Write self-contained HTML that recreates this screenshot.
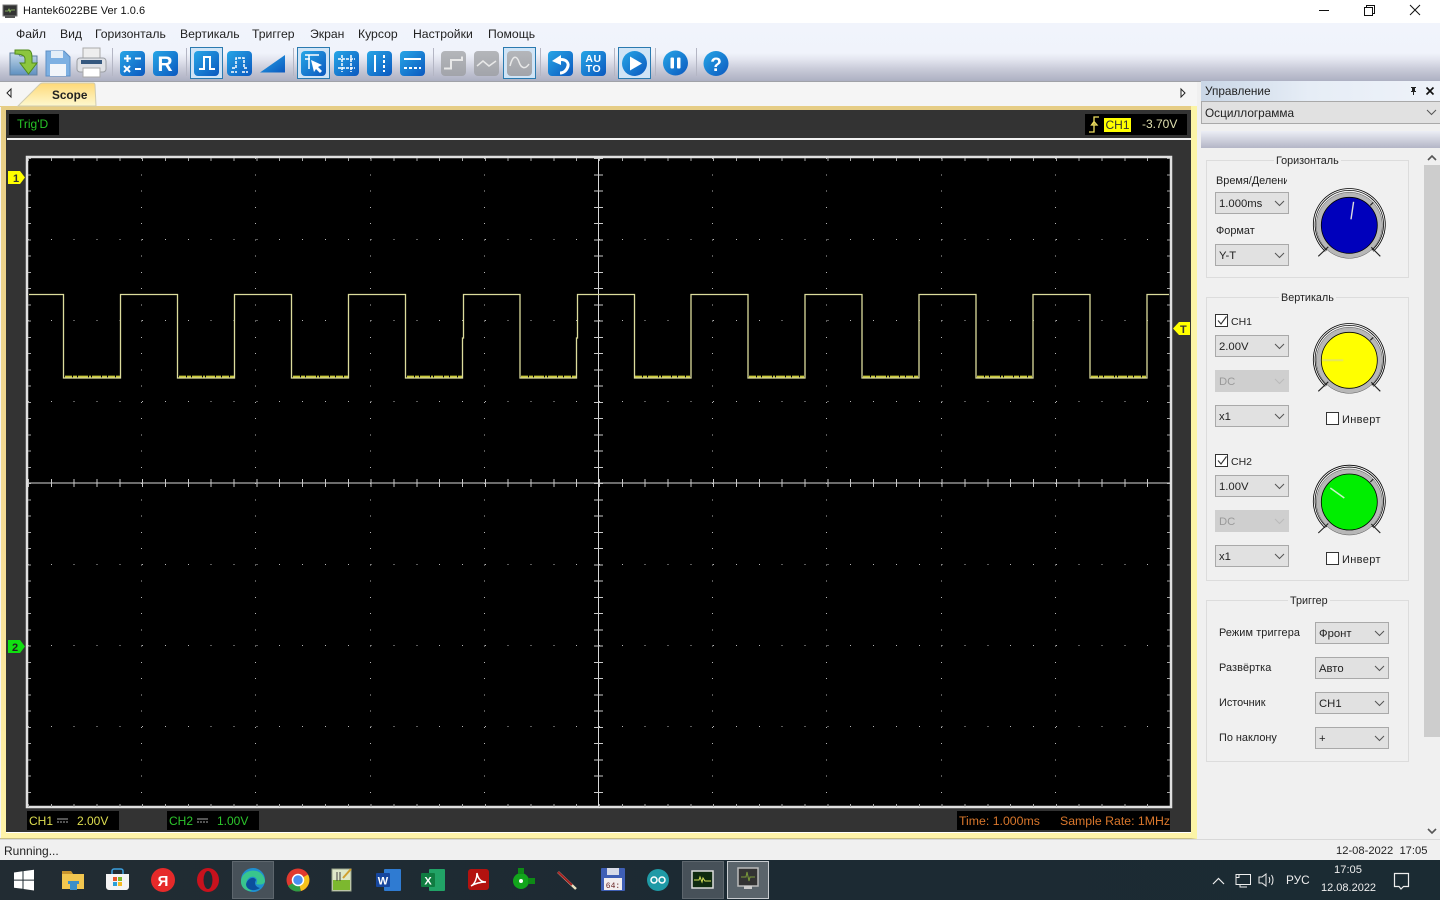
<!DOCTYPE html>
<html lang="ru"><head><meta charset="utf-8"><title>Hantek6022BE Ver 1.0.6</title>
<style>
html,body{margin:0;padding:0;width:1440px;height:900px;overflow:hidden;background:#f0f0f0;font-family:"Liberation Sans","DejaVu Sans",sans-serif;font-size:11px;color:#222}
div,span{position:absolute;white-space:nowrap;box-sizing:border-box}
svg{position:absolute;left:0;top:0}
.m{top:27px;font-size:12.2px;color:#222}
.c{width:74px;height:22px;background:#e1e1e1;border:1px solid #a9a9a9;line-height:22px;padding-left:3px;font-size:11.3px;color:#222}
.c.d{background:#cfcfcf;border-color:#cfcfcf;color:#9a9a9a}
.l{font-size:10.9px;color:#222;margin-top:1px}
.s{font-size:10.5px;color:#222;margin-top:1px}
.i{font-size:11px;letter-spacing:.35px;color:#222;margin-top:1px}
.g{border:1px solid #dcdcdc;left:1206px;width:203px}
.lg{background:#f0f0f0;font-size:10.8px;color:#222;padding:0 2px;text-align:center;margin-top:1px}
.cb{width:13px;height:13px;background:#fff;border:1px solid #333}
</style></head><body>
<!-- title bar -->
<div style="left:0;top:0;width:1440px;height:23px;background:#fff"></div>
<div style="left:23px;top:5px;font-size:11px;color:#111;letter-spacing:.05px;line-height:13px">Hantek6022BE Ver 1.0.6</div>
<!-- menu + toolbar -->
<div style="left:0;top:23px;width:1440px;height:59px;background:linear-gradient(#f1f4fc 0,#f0f3fb 30px,#e4e6f0 36px,#c9cbd9 46px,#adb0c2 58px)"></div>
<div style="left:0;top:81px;width:1440px;height:1px;background:#a0a2a8"></div>
<span class="m" style="left:16px">Файл</span><span class="m" style="left:60px">Вид</span><span class="m" style="left:95px">Горизонталь</span><span class="m" style="left:180px">Вертикаль</span><span class="m" style="left:252px">Триггер</span><span class="m" style="left:310px">Экран</span><span class="m" style="left:358px">Курсор</span><span class="m" style="left:413px">Настройки</span><span class="m" style="left:488px">Помощь</span>
<!-- tab row -->
<div style="left:0;top:82px;width:1197px;height:25px;background:#f5f5f5"></div>
<!-- scope frame -->
<div style="left:0;top:106px;width:1197px;height:733px;background:linear-gradient(#e6cd85,#f5dc96 60%,#fff3a8);border-bottom:1px solid #c9bf84;border-right:6px solid #fbf4a6"></div>
<div style="left:0;top:107px;width:1px;height:731px;background:#f5f5f5"></div>
<div style="left:6px;top:110px;width:1185px;height:722px;background:#333"></div>
<div style="left:6px;top:832px;width:1185px;height:1px;background:#fff"></div>
<div style="left:7px;top:138px;width:1184px;height:2px;background:#f2f2f2"></div>
<div style="left:9px;top:114px;width:50px;height:21px;background:#000;color:#27c427;font-size:12px;line-height:21px;padding-left:8px">Trig'D</div>
<div style="left:1085px;top:114px;width:102px;height:21px;background:#000"></div>
<div style="left:1104px;top:118px;width:27px;height:14px;background:#ff0;color:#333;font-size:12px;line-height:14px;text-align:center">CH1</div>
<div style="left:1142px;top:114px;color:#e0e0b0;font-size:12px;line-height:21px">-3.70V</div>
<!-- bottom info boxes -->
<div style="left:27px;top:811px;width:92px;height:19px;background:#000;color:#dede50;font-size:12px;line-height:20px"><span style="left:2px;top:0">CH1</span><span style="left:50px;top:0">2.00V</span></div>
<div style="left:167px;top:811px;width:92px;height:19px;background:#000;color:#2cc62c;font-size:12px;line-height:20px"><span style="left:2px;top:0">CH2</span><span style="left:50px;top:0">1.00V</span></div>
<div style="left:957px;top:811px;width:213px;height:19px;background:#000;color:#d9772c;font-size:12.3px;line-height:20px"><span style="left:2px;top:0">Time: 1.000ms</span><span style="left:103px;top:0">Sample Rate: 1MHz</span></div>
<!-- right panel -->
<div style="left:1197px;top:82px;width:243px;height:757px;background:#f0f0f0"></div>
<div style="left:1201px;top:81px;width:239px;height:20px;background:linear-gradient(90deg,#c9d6e6,#e6edf6 45%,#eef2f9);font-size:11.8px;line-height:20px;padding-left:4px;color:#222">Управление</div>
<div style="left:1201px;top:101px;width:239px;height:23px;background:#e1e1e1;border:1px solid #a9a9a9;font-size:11.8px;line-height:23px;padding-left:3px;color:#222;border-right:0">Осциллограмма</div>
<div style="left:1201px;top:131px;width:239px;height:17px;background:linear-gradient(#eceef5,#b3b5c6)"></div>
<div style="left:1424px;top:148px;width:16px;height:691px;background:#f0f0f0"></div>
<div style="left:1424px;top:165px;width:16px;height:572px;background:#cdcdcd"></div>
<div class="g" style="top:160px;height:118px"></div>
<div class="g" style="top:297px;height:284px"></div>
<div class="g" style="top:600px;height:162px"></div>
<div class="lg" style="left:1274px;top:154px">Горизонталь</div>
<div class="lg" style="left:1279px;top:291px">Вертикаль</div>
<div class="lg" style="left:1288px;top:594px">Триггер</div>
<span class="l" style="left:1216px;top:174px">Время/Делени</span><div style="left:1287px;top:172px;width:10px;height:16px;background:#f0f0f0"></div>
<span class="l" style="left:1216px;top:224px">Формат</span>
<div class="c" style="left:1215px;top:192px">1.000ms</div>
<div class="c" style="left:1215px;top:244px">Y-T</div>
<div class="cb" style="left:1215px;top:314px"></div><span class="s" style="left:1231px;top:315px">CH1</span>
<div class="c" style="left:1215px;top:335px">2.00V</div>
<div class="c d" style="left:1215px;top:370px">DC</div>
<div class="c" style="left:1215px;top:405px">x1</div>
<div class="cb" style="left:1326px;top:412px"></div><span class="i" style="left:1342px;top:413px">Инверт</span>
<div class="cb" style="left:1215px;top:454px"></div><span class="s" style="left:1231px;top:455px">CH2</span>
<div class="c" style="left:1215px;top:475px">1.00V</div>
<div class="c d" style="left:1215px;top:510px">DC</div>
<div class="c" style="left:1215px;top:545px">x1</div>
<div class="cb" style="left:1326px;top:552px"></div><span class="i" style="left:1342px;top:553px">Инверт</span>
<span class="l" style="left:1219px;top:626px;letter-spacing:.1px">Режим триггера</span>
<span class="l" style="left:1219px;top:661px;letter-spacing:.1px">Развёртка</span>
<span class="l" style="left:1219px;top:696px">Источник</span>
<span class="l" style="left:1219px;top:731px">По наклону</span>
<div class="c" style="left:1315px;top:622px">Фронт</div>
<div class="c" style="left:1315px;top:657px">Авто</div>
<div class="c" style="left:1315px;top:692px">CH1</div>
<div class="c" style="left:1315px;top:727px">+</div>
<!-- status -->
<div style="left:0;top:839px;width:1440px;height:1px;background:#d8d8d8"></div>
<div style="left:4px;top:844px;font-size:12px;color:#222">Running...</div>
<div style="left:1336px;top:845px;font-size:11.2px;color:#222">12-08-2022&nbsp; 17:05</div>
<!-- taskbar -->
<div style="left:0;top:860px;width:1440px;height:40px;background:linear-gradient(90deg,#222c33,#1c2a33 50%,#1b2b33)"></div>
<div style="left:232px;top:861px;width:42px;height:38px;background:#475159;border:1px solid #5d666d"></div>
<div style="left:682px;top:861px;width:42px;height:38px;background:#475159;border:1px solid #5d666d"></div>
<div style="left:727px;top:861px;width:42px;height:38px;background:#5a646b;border:1px solid #c8ccd0"></div>
<div style="left:1286px;top:873px;color:#eee;font-size:11.8px">РУС</div>
<div style="left:1334px;top:864px;color:#eee;font-size:11.2px">17:05</div>
<div style="left:1321px;top:882px;color:#eee;font-size:11px">12.08.2022</div>

<svg width="1440" height="900" viewBox="0 0 1440 900" xmlns="http://www.w3.org/2000/svg">
<defs>
<linearGradient id="b" x1="0" y1="0" x2="1" y2="1"><stop offset="0" stop-color="#27a6e6"/><stop offset="1" stop-color="#0b58bf"/></linearGradient>
<linearGradient id="gr" x1="0" y1="0" x2="0" y2="1"><stop offset="0" stop-color="#b4b6ba"/><stop offset="1" stop-color="#a2a4aa"/></linearGradient>
<linearGradient id="tab" x1="0" y1="0" x2="0" y2="1"><stop offset="0" stop-color="#ffd977"/><stop offset="1" stop-color="#fdf8cf"/></linearGradient>
<linearGradient id="fld" x1="0" y1="0" x2="0" y2="1"><stop offset="0" stop-color="#c5d9ea"/><stop offset="1" stop-color="#5f90c0"/></linearGradient>
<g id="knob">
<path d="M-24,26 A36,36 0 1 1 24,26" fill="none" stroke="#000" stroke-width=".8"/>
<path d="M-22.500,25 A34.200,34.200 0 1 1 22.500,25" fill="none" stroke="#000" stroke-width=".8"/>
<circle r="33" fill="#b7b7b7" stroke="#555" stroke-width=".5"/>
<path d="M-31,31 L-21,21.500 M31,31 L22,22 M21,-20 L24,-23" stroke="#222" stroke-width="1.100"/>
</g>
<path id="cv" d="M0,0 l4.500,4.500 4.500,-4.500" fill="none" stroke="#555" stroke-width="1"/>
</defs>

<!-- tab -->
<path d="M18,106 L40,84 Q41,83 43,83 L93,83 Q95,83 95,85 L96,106 Z" fill="url(#tab)" stroke="#cfcbb0"/>
<text x="52" y="99" font-family="Liberation Sans,sans-serif" font-size="11.800" font-weight="bold" fill="#222">Scope</text>
<path d="M11,89 L7,93 L11,97 Z" fill="#fff" stroke="#222"/>
<path d="M1181,89 L1185,93 L1181,97 Z" fill="#fff" stroke="#222"/>

<!-- plot -->
<rect x="27" y="157" width="1144" height="650" fill="#000" stroke="#e0e0e0" stroke-width="2.500"/>
<g stroke-width="1" fill="none" shape-rendering="crispEdges">
<g stroke-dasharray="1 15.25" stroke="#b5b5b5">
<path d="M141.500,158V807M255.500,158V807M370.500,158V807M484.500,158V807M712.500,158V807M826.500,158V807M941.500,158V807M1055.500,158V807"/>
</g>
<g stroke-dasharray="1 21.84" stroke="#b5b5b5">
<path d="M28,239.500H1170M28,320.500H1170M28,401.500H1170M28,564.500H1170M28,645.500H1170M28,726.500H1170"/>
</g>
<!-- border ticks -->
<g stroke="#a8a8a8" stroke-dasharray="1 21.84"><path stroke-width="3" d="M28,159.500H1170M28,805.500H1170"/></g>
<g stroke="#a8a8a8" stroke-dasharray="1 15.25"><path stroke-width="3" d="M29.500,158.200V807M1168.500,158.200V807"/></g>
<!-- center -->
<path d="M598.500,158V807M28,483H1170" stroke="#d8d8d8"/>
<g stroke="#c8c8c8" stroke-dasharray="1 15.25"><path stroke-width="9" d="M598.500,158.200V807"/></g>
<g stroke="#c8c8c8" stroke-dasharray="1 21.84"><path stroke-width="8" d="M28,483H1170"/></g>
</g>
<!-- wave noise -->
<path d="M65,376.600H120M179,376.600H234M293,376.600H348M407,376.600H462M521,376.600H576M635,376.600H690M749,376.600H804M863,376.600H918M977,376.600H1032M1091,376.600H1146" stroke="#c8c83a" stroke-width="2" stroke-dasharray="7 1 4 1 10 1 2 1 9 1 5 1" fill="none"/>
<!-- waveform -->
<path d="M29,294.500H63.500V378H120.500V294.500H177.500V378H234.500V294.500H291.500V378H348.500V294.500H405.500V378H462.500V338H463.500V294.500H520V378H576.500V338H577.500V294.500H634.500V378H691V294.500H748V378H805V294.500H862V378H919V294.500H976V378H1033V294.500H1090V378H1147V294.500H1169" fill="none" stroke="#dcdc9c" stroke-width="1.300"/>
<!-- markers -->
<path d="M8,171H20L25,177.500L20,184H8Z" fill="#ff0"/><text x="13" y="182" font-family="Liberation Sans,sans-serif" font-size="11" font-weight="bold" fill="#333">1</text>
<path d="M8,640H20L25,646.500L20,653H8Z" fill="#11e011"/><text x="12" y="651" font-family="Liberation Sans,sans-serif" font-size="11" font-weight="bold" fill="#222">2</text>
<path d="M1190,322H1179L1173,328.500L1179,335H1190Z" fill="#ff0"/><text x="1180" y="333" font-family="Liberation Sans,sans-serif" font-size="11" font-weight="bold" fill="#333">T</text>
<!-- trigger glyph -->
<path d="M1089,132H1094V117H1099M1091.500,125L1094,121.500L1097,125Z" fill="none" stroke="#f0e060" stroke-width="1.300"/>
<!-- coupling glyphs -->
<path d="M57,819H68M57,822H59M60,822H62M63,822H65M66,822H68M197,819H208M197,822H199M200,822H202M203,822H205M206,822H208" stroke="#ddd" stroke-width=".8" fill="none"/>

<!-- window buttons -->
<path d="M1319,10.500H1329" stroke="#111"/>
<rect x="1364.500" y="7.500" width="8" height="8" fill="none" stroke="#111"/><path d="M1366.500,7.500V5.500H1374.500V13.500H1372.500" fill="none" stroke="#111"/>
<path d="M1410,5L1420,15M1420,5L1410,15" stroke="#111"/>
<!-- app icon -->
<rect x="3" y="5" width="14" height="11" fill="#333" stroke="#777"/><path d="M5,11h3l1,-2 1,3 1,-2h4" stroke="#9c6" fill="none" stroke-width=".8"/><rect x="5" y="16" width="10" height="2" fill="#555"/>

<!-- panel header buttons -->
<path d="M1411,87h5v1h-1v3h1v1h-2v3h-1v-3h-2v-1h1v-3h-1z" fill="#222"/>
<path d="M1426.500,87.500L1433.500,94.500M1433.500,87.500L1426.500,94.500" stroke="#111" stroke-width="1.600"/>
<use href="#cv" x="1427" y="110"/>
<path d="M1428,160L1432,156L1436,160" fill="none" stroke="#555" stroke-width="1.600"/>
<path d="M1428,829L1432,833L1436,829" fill="none" stroke="#555" stroke-width="1.600"/>

<!-- combos arrows -->
<use href="#cv" x="1275" y="201"/><use href="#cv" x="1275" y="253"/><use href="#cv" x="1275" y="344"/>
<use href="#cv" x="1275" y="414"/><use href="#cv" x="1275" y="484"/><use href="#cv" x="1275" y="554"/>
<path d="M1275,379l4.500,4.500 4.500,-4.500M1275,519l4.500,4.500 4.500,-4.500" fill="none" stroke="#bbb"/>
<use href="#cv" x="1375" y="631"/><use href="#cv" x="1375" y="666"/><use href="#cv" x="1375" y="701"/><use href="#cv" x="1375" y="736"/>
<!-- check marks -->
<path d="M1218,320.500L1221,324L1226.500,316.500M1218,460.500L1221,464L1226.500,456.500" fill="none" stroke="#333" stroke-width="1.100"/>

<!-- knobs -->
<g transform="translate(1349.300,225.300)"><use href="#knob"/><circle r="28" fill="#0000bc" stroke="#000" stroke-width=".8"/><path d="M4.300,-23.500L1.700,-6" stroke="#ddd" stroke-width="1.400"/></g>
<g transform="translate(1349.300,360.300)"><use href="#knob"/><circle r="28" fill="#ffff00" stroke="#000" stroke-width=".8"/><path d="M-27,0H-6" stroke="#e6e65a" stroke-width="2"/></g>
<g transform="translate(1349.300,502)"><use href="#knob"/><circle r="28" fill="#00ee00" stroke="#000" stroke-width=".8"/><path d="M-19,-14L-5,-4" stroke="#c9f2c9" stroke-width="1.500"/></g>

<!-- toolbar separators -->
<g stroke="#b4b6c4"><path d="M112.500,48V76M186.500,48V76M293.500,48V76M433.500,48V76M540.500,48V76M614.500,48V76M655.500,48V76M696.500,48V76"/></g>
<!-- selected backgrounds -->
<g fill="#d0e4f6" stroke="#2a7ab0"><rect x="190.500" y="47.500" width="32" height="31"/><rect x="297.500" y="47.500" width="32" height="31"/><rect x="503.500" y="47.500" width="32" height="31"/><rect x="618.500" y="47.500" width="32" height="31"/></g>
<!-- open -->
<path d="M10,53h8l2,3h17v19H10z" fill="url(#fld)" stroke="#5f7f9f"/>
<path d="M15,50h13c3,0 4,3 4,8v5h5l-8.500,11L20,63h5v-4c0,-3 -3,-5 -10,-5z" fill="#8cc63f" stroke="#4f8a1b"/>
<!-- save -->
<path d="M46,51h18l6,6v19h-24z" fill="#7db0e2" stroke="#5d8fc6"/><rect x="51" y="51" width="12" height="7" fill="#e4eef8"/><rect x="50" y="64" width="16" height="12" fill="#f1f5fa"/>
<!-- print -->
<rect x="83" y="48" width="17" height="12" fill="#eee" stroke="#aaa"/><rect x="77" y="58" width="29" height="14" rx="3" fill="#dfe1e6" stroke="#9a9da2"/><rect x="81" y="60" width="21" height="4" fill="#35587f"/><rect x="83" y="68" width="17" height="9" fill="#fff" stroke="#aaa"/>
<!-- blue btns -->
<g fill="url(#b)">
<rect x="120" y="51" width="25" height="25" rx="4"/><rect x="153" y="51" width="25" height="25" rx="4"/>
<rect x="194" y="51" width="25" height="25" rx="4"/><rect x="227" y="51" width="25" height="25" rx="4"/>
<path d="M260,72.500L285,55V72.500Z"/>
<rect x="301" y="51" width="25" height="25" rx="4"/><rect x="334" y="51" width="25" height="25" rx="4"/><rect x="367" y="51" width="25" height="25" rx="4"/><rect x="400" y="51" width="25" height="25" rx="4"/>
<rect x="548" y="51" width="25" height="25" rx="4"/><rect x="581" y="51" width="25" height="25" rx="4"/>
<circle cx="634.500" cy="63.500" r="12.500"/><circle cx="675.500" cy="63" r="12.500"/><circle cx="716" cy="63.500" r="12.500"/>
</g>
<g fill="url(#gr)"><rect x="441" y="51" width="25" height="25" rx="4"/><rect x="474" y="51" width="25" height="25" rx="4"/><rect x="507" y="51" width="25" height="25" rx="4"/></g>
<g stroke="#fff" fill="none" stroke-width="1.800">
<path d="M124,58.500h7M127.500,55v7M135,58.500h6M124,66l6,6M130,66l-6,6M135,69h6" stroke-width="2"/>
<path d="M199,69h5V57h6v12h5" stroke-width="2"/>
<path d="M232,68h4V58h8v10h4M231,72h6M242,72h6" stroke-width="1.500" stroke-dasharray="3 1"/>
<path d="M305,55h14M309,55v14M305,59h5" stroke-width="1.500"/><path d="M311,60l11,5-4,2 4,4-2,2-4,-4-2,3z" fill="#fff" stroke="none"/>
<path d="M338,59h17M338,68h17M342,55v17M351,55v17" stroke-width="1.500" stroke-dasharray="3 1"/>
<path d="M375,55v17" stroke-width="2"/><path d="M384,55v17" stroke-width="2" stroke-dasharray="3 2"/>
<path d="M404,59h17" stroke-width="2"/><path d="M404,68h17" stroke-width="2" stroke-dasharray="3 2"/>
<path d="M444,68.500h7v-8.500h11v-3.500" stroke="#e8e8e8" stroke-width="2"/>
<path d="M477,66l6,-5 6,5 7,-5" stroke="#e8e8e8" stroke-width="1.500"/>
<path d="M510,66c3,-12 7,-10 9,-4s6,8 10,2" stroke="#e8e8e8" stroke-width="1.500"/>
<path d="M557,61c7,-4 12,1 11,5s-4,7 -8,7" stroke-width="3"/>
</g>
<path d="M561,55v10l-9,-4z" fill="#fff"/>
<text x="157.500" y="71" font-family="Liberation Sans,sans-serif" font-size="21" font-weight="bold" fill="#fff">R</text>
<text x="593.500" y="62" text-anchor="middle" font-family="Liberation Sans,sans-serif" font-size="10.500" font-weight="bold" fill="#fff" letter-spacing=".5">AU</text>
<text x="593.500" y="72" text-anchor="middle" font-family="Liberation Sans,sans-serif" font-size="10.500" font-weight="bold" fill="#fff" letter-spacing=".5">TO</text>
<path d="M630,56.500L642,63.500L630,70.500Z" fill="#fff"/>
<rect x="670.500" y="57.500" width="3.500" height="11" rx="1" fill="#fff"/><rect x="677" y="57.500" width="3.500" height="11" rx="1" fill="#fff"/>
<text x="716" y="71" text-anchor="middle" font-family="Liberation Sans,sans-serif" font-size="19" font-weight="bold" fill="#fff">?</text>

<!-- taskbar icons -->
<path d="M14,872.500l8.500,-1.200v8.300H14zM23.500,871.100L34,869.700v9.900H23.500zM14,880.600h8.500v8.200L14,887.700zM23.500,880.600H34v9.900l-10.500,-1.500z" fill="#fff"/>
<path d="M62,871h9l2,3h11v15H62z" fill="#f2c64f"/><path d="M62,871h9l2,3H62z" fill="#c9952e"/><path d="M68,884h11v-3h-11zM70,884h7v6h-7z" fill="#3b8ec9"/>
<path d="M106,874h23v13a3,3 0 0 1 -3,3h-17a3,3 0 0 1 -3,-3z" fill="#f4f4f4"/><path d="M112,874v-3a2,2 0 0 1 2,-2h7a2,2 0 0 1 2,2v3" fill="none" stroke="#3ba0e0" stroke-width="1.500"/><rect x="113" y="877" width="4" height="4" fill="#e8552b"/><rect x="118" y="877" width="4" height="4" fill="#7db92a"/><rect x="113" y="882" width="4" height="4" fill="#2a9fd8"/><rect x="118" y="882" width="4" height="4" fill="#f6b91f"/>
<circle cx="163" cy="880" r="12" fill="#e62a2a"/><text x="163" y="886" text-anchor="middle" font-family="Liberation Sans,sans-serif" font-weight="bold" font-size="15" fill="#fff">Я</text>
<ellipse cx="208" cy="880" rx="11" ry="12" fill="#c8121d"/><ellipse cx="208" cy="880" rx="4.500" ry="9" fill="#1f2a33"/>
<circle cx="253" cy="880" r="12" fill="#1f8fd0"/><path d="M241,882c0,-14 22,-16 24,-1c0,4 -6,4 -9,3c4,-6 -4,-10 -8,-5c-3,3 -2,9 4,12c-6,1 -11,-4 -11,-9z" fill="#39c58d"/><path d="M246,884c2,-6 8,-8 10,-4c-2,3 -1,7 4,8c-6,4 -14,2 -14,-4z" fill="#0b4f9c"/>
<circle cx="298" cy="880" r="11.500" fill="#e0392f"/><path d="M298,880L288,886A11.500,11.500 0 0 0 301,891z" fill="#2f9e44"/><path d="M298,880L301,891A11.500,11.500 0 0 0 308,874.500z" fill="#f6c21c"/><circle cx="298" cy="880" r="5.500" fill="#4a8ff0" stroke="#fff" stroke-width="1.500"/>
<rect x="332" y="869" width="19" height="22" fill="#dfe8c8" stroke="#9aa58a"/><path d="M333,880h17v10h-17z" fill="#7cb82f"/><path d="M337,872v9M340,872v9" stroke="#444"/><path d="M343,878l8,-9" stroke="#d0a030" stroke-width="2"/>
<rect x="384" y="869" width="17" height="22" rx="1" fill="#2f7bd2"/><rect x="376" y="873" width="14" height="14" rx="1" fill="#17479e"/><text x="383" y="884.500" text-anchor="middle" font-family="Liberation Sans,sans-serif" font-weight="bold" font-size="11" fill="#fff">W</text>
<rect x="429" y="869" width="16" height="22" rx="1" fill="#21a366"/><rect x="421" y="873" width="14" height="14" rx="1" fill="#107c41"/><text x="428" y="884.500" text-anchor="middle" font-family="Liberation Sans,sans-serif" font-weight="bold" font-size="11" fill="#fff">X</text>
<rect x="468" y="869" width="21" height="21" rx="3" fill="#b3120f"/><path d="M471,886c4,-2 6,-8 6,-13c1,6 4,9 9,9c-5,0 -10,1 -15,4z" fill="none" stroke="#fff" stroke-width="1.500"/>
<circle cx="521" cy="881" r="8" fill="#12a51c"/><rect x="518" y="868" width="6" height="6" fill="#0e8a16"/><rect x="528" y="878" width="7" height="6" fill="#0e8a16"/><circle cx="521" cy="881" r="2" fill="#fff"/>
<path d="M558,872L576,889" stroke="#e8e0c0" stroke-width="2.500"/><path d="M558,872L572,885" stroke="#a52020" stroke-width="2"/>
<rect x="601" y="868" width="24" height="23" rx="1" fill="#3f5fb5"/><rect x="607" y="868" width="12" height="7" fill="#d7dbe8"/><rect x="604" y="878" width="18" height="12" fill="#f2eeee"/><text x="613" y="888" text-anchor="middle" font-family="Liberation Mono,monospace" font-size="8" fill="#622">64:</text>
<circle cx="658" cy="880" r="11" fill="#1f9aa6"/><circle cx="654" cy="880" r="3" fill="none" stroke="#fff" stroke-width="1.500"/><circle cx="662" cy="880" r="3" fill="none" stroke="#fff" stroke-width="1.500"/>
<rect x="692" y="871" width="21" height="17" fill="#0f2a0f" stroke="#ddd" stroke-width="1.500"/><path d="M694,880h5l1,-3 2,5 1,-4 2,3h6" stroke="#d6e05a" fill="none"/>
<rect x="738" y="868" width="20" height="18" fill="#333" stroke="#bbb" stroke-width="1.500"/><path d="M741,877h5l1,-5 2,9 1,-4h5" stroke="#7a9a3a" fill="none"/><rect x="744" y="886" width="8" height="3" fill="#ccc"/>
<!-- tray -->
<g stroke="#eee" fill="none"><path d="M1213,884l5.500,-5.500 5.500,5.500" stroke-width="1.200"/>
<path d="M1236,874.500h14.500v10h-14.500zM1240,884.500v2.500h7M1236,874.500h3v3h-3" stroke-width="1"/>
<path d="M1259,877v6h3l4,3v-12l-4,3zM1269,877c1,2 1,4 0,6M1271.500,875c2,3 2,7 0,10" stroke-width="1"/>
<path d="M1394.500,873.500h14v13h-5l-2.500,2.500-2,-2.500h-4.500z" stroke-width="1.200"/></g>
</svg>
</body></html>
